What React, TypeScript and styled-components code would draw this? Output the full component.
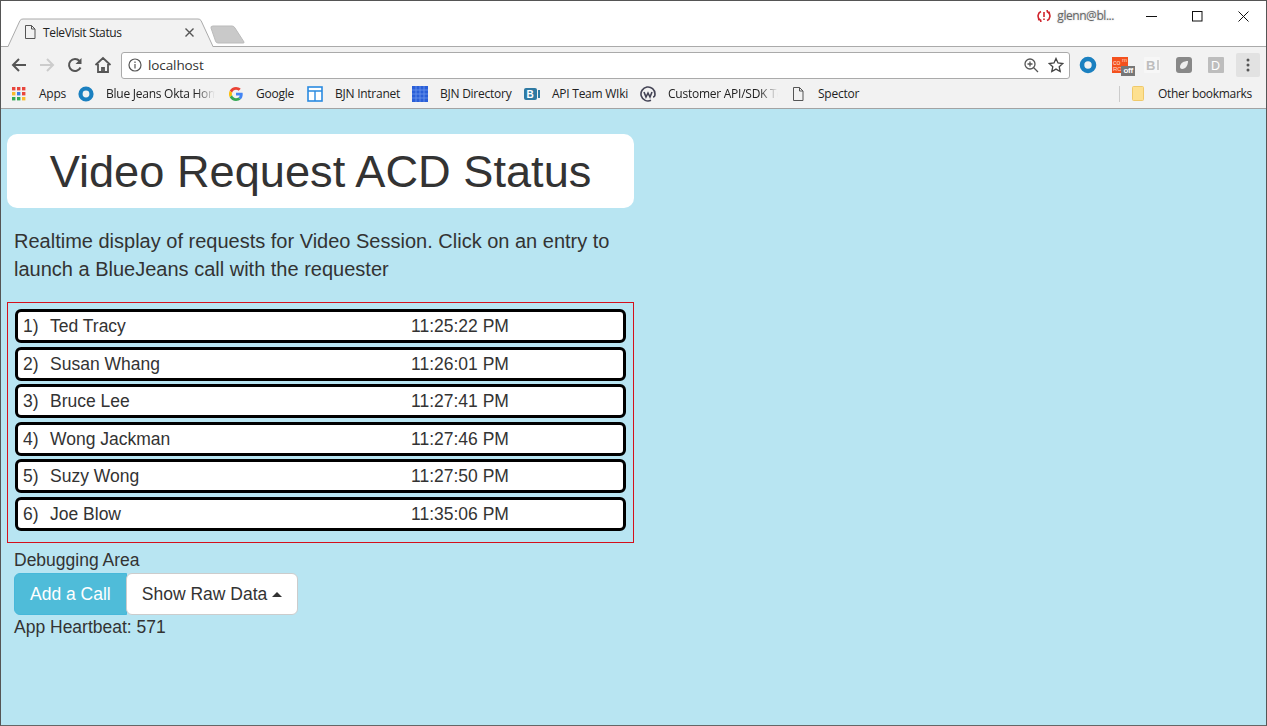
import React from "react";
import styled, { createGlobalStyle } from "styled-components";

const Global = createGlobalStyle`
  html, body { margin: 0; padding: 0; height: 100%; }
  body { background: #b8e5f2; font-family: "Liberation Sans", Arial, sans-serif; overflow: hidden; }
`;

const Win = styled.div`
  width: 1267px; height: 726px; box-sizing: border-box;
  border: 1px solid #555; border-bottom-color: #666;
  display: flex; flex-direction: column; background: #b8e5f2;
`;
const TitleBar = styled.div`
  height: 46px; background: #fff; display: flex; align-items: flex-start; flex: none;
  box-sizing: border-box; border-bottom: 1px solid #aaa; position: relative;
`;
const TabSvg = styled.svg`position: absolute; left: 0; top: 0;`;
const TabIcon = styled.div`
  position: absolute; left: 21px; top: 23px; display: flex;
`;
const TabTitle = styled.span`
  position: absolute; left: 42px; top: 25px; font: 12px/14px "Open Sans", "Noto Sans", sans-serif; color: #222;
  letter-spacing: -0.35px;
`;
const TabClose = styled.div`position: absolute; left: 184px; top: 27px; display: flex;`;
const Profile = styled.div`
  margin-left: auto; display: flex; align-items: center; height: 30px;
`;
const ProfileName = styled.span`
  font: 12px/14px "Open Sans", sans-serif; color: #666; letter-spacing: -0.45px; margin: 0 14px 0 6px;
  text-shadow: 0 0 2px #bbb;
`;
const WinBtn = styled.div`width: 46px; height: 30px; display: flex; align-items: center; justify-content: center;`;
const Toolbar = styled.div`
  height: 34px; background: #f2f2f2; display: flex; align-items: center; flex: none; padding: 2px 0 0 4px; box-sizing: border-box;
`;
const NavBtn = styled.div`width: 28px; height: 28px; display: flex; align-items: center; justify-content: center; flex: none;`;
const Omnibox = styled.div`
  width: 949px; height: 27px; box-sizing: border-box; margin-left: 4px; background: #fff; border: 1px solid #aaa; border-radius: 3px;
  display: flex; align-items: center; padding: 0 5px 0 6px; flex: none;
`;
const Url = styled.span`font: 13.5px/16px "Open Sans", sans-serif; color: #333; margin-left: 6px; letter-spacing: -0.1px;`;
const OmniRight = styled.div`margin-left: auto; display: flex; align-items: center; gap: 9px;`;
const Ext = styled.div`width: 32px; height: 28px; display: flex; align-items: center; justify-content: center; position: relative; flex: none;`;
const ExtRow = styled.div`display: flex; align-items: center; margin-left: 2px;`;
const Off = styled.span`
  position: absolute; right: 1px; bottom: 3px; background: #777; color: #fff; font: bold 8px/10px "Liberation Sans", sans-serif; padding: 0 2px; letter-spacing: -0.2px;
`;
const MenuBtn = styled.div`width: 24px; height: 24px; background: #e2e2e2; display: flex; align-items: center; justify-content: center; border-radius: 2px; margin-left: 4px;`;
const Bookmarks = styled.div`
  height: 25px; background: #f2f2f2; border-bottom: 1px solid #a3a3a3; box-sizing: content-box; display: flex; align-items: center; flex: none;
  padding: 0 0 2px 10px; position: relative;
`;
const Mark = styled.div<{ $w: number; $gap: number; $fade?: boolean }>`
  display: flex; align-items: center; width: ${(p) => p.$w}px; margin-right: ${(p) => p.$gap}px; flex: none;
  ${(p) => (p.$fade ? "mask-image: linear-gradient(to right, #000 86%, transparent 100%);" : "")}
`;
const MarkIcon = styled.div`width: 16px; height: 16px; display: flex; align-items: center; justify-content: center; flex: none; margin-right: 12px;`;
const MarkText = styled.span`
  font: 12px/14px "Open Sans", "Noto Sans", sans-serif; color: #222; white-space: nowrap; letter-spacing: -0.25px;
`;
const OtherText = styled(MarkText)`letter-spacing: -0.3px;`;
const OtherWrap = styled.div`
  position: absolute; right: 0; top: 0; height: 25px; display: flex; align-items: center; padding-right: 14px;
`;
const Sep = styled.div`width: 1px; height: 16px; background: #ccc; margin-right: 10px;`;
const Page = styled.main`
  flex: 1; padding: 25px 0 0 6px; color: #333; width: 627px;
`;
const Jumbo = styled.div`
  background: #fff; border-radius: 10px; height: 74px; box-sizing: border-box; padding-top: 2px; width: 627px; display: flex; align-items: center; justify-content: center;
`;
const H1 = styled.h1`font-size: 45.2px; font-weight: 400; margin: 0; line-height: 1; color: #333;`;
const Lead = styled.p`
  margin: 19px 0 0 7px; font-size: 20px; line-height: 28px; width: 610px; color: #333;
`;
const Queue = styled.div`
  margin-top: 19px; width: 627px; height: 241px; box-sizing: border-box; border: 1px solid #d4101c;
  padding: 6px 7px 0; display: flex; flex-direction: column;
`;
const Row = styled.div`
  height: 34px; box-sizing: border-box; background: #fff; border: 3px solid #000; border-radius: 6px; display: flex; align-items: center;
  padding: 0 0 0 5px; font-size: 17.5px; color: #333; flex: none;
  &:nth-child(even) { margin-top: 4px; }
  &:nth-child(odd):not(:first-child) { margin-top: 3px; }
`;
const Num = styled.span`width: 27px; flex: none;`;
const Name = styled.span`width: 361px; flex: none;`;
const Debug = styled.div`margin: 5px 0 0 7px; font-size: 17.5px; line-height: 25px; color: #333;`;
const BtnRow = styled.div`display: flex; height: 42px;`;
const Btn = styled.button<{ $primary?: boolean }>`
  font: 17.5px/24px "Liberation Sans", sans-serif; padding: 0 15px; height: 42px; box-sizing: border-box; cursor: pointer;
  background: ${(p) => (p.$primary ? "#4fbcd9" : "#fff")};
  color: ${(p) => (p.$primary ? "#fff" : "#333")};
  border: 1px solid ${(p) => (p.$primary ? "#46b8da" : "#ccc")};
  border-radius: ${(p) => (p.$primary ? "6px 0 0 6px" : "6px")};
  margin-left: ${(p) => (p.$primary ? "0" : "-1px")};
  display: flex; align-items: center;
`;
const Caret = styled.span`
  width: 0; height: 0; margin-left: 5px; border-left: 5px solid transparent; border-right: 5px solid transparent; border-bottom: 5px solid #333;
`;
const Beat = styled.div`line-height: 25px;`;

const rows = [
  ["Ted Tracy", "11:25:22 PM"], ["Susan Whang", "11:26:01 PM"], ["Bruce Lee", "11:27:41 PM"],
  ["Wong Jackman", "11:27:46 PM"], ["Suzy Wong", "11:27:50 PM"], ["Joe Blow", "11:35:06 PM"],
];

const Doc = ({ s = 16 }: { s?: number }) => (
  <svg width={s} height={s} viewBox="0 0 16 16" fill="none" stroke="#555" strokeWidth="1">
    <path d="M3.5 1.5h6l3.5 3.5v9.5h-9.5z M9.5 1.5V5H13" />
  </svg>
);

const marks: { t: string; w: number; g: number; fade?: boolean; i: React.ReactNode }[] = [
  { t: "Apps", w: 56, g: 11, i: (
    <svg width="14" height="14" viewBox="0 0 14 14">
      {[["#e8453c","#e8453c","#e8453c"],["#f9bb2d","#3b7de8","#e8453c"],["#34a853","#34a853","#f9bb2d"]].map((r,y)=>r.map((c,x)=><rect key={`${x}${y}`} x={x*5} y={y*5} width="3.4" height="3.4" fill={c}/>))}
    </svg>) },
  { t: "Blue Jeans Okta Hom", w: 137, g: 13, fade: true, i: (
    <svg width="16" height="16" viewBox="0 0 16 16"><circle cx="8" cy="8" r="5.5" fill="none" stroke="#1b80c0" strokeWidth="4.2"/></svg>) },
  { t: "Google", w: 66, g: 13, i: (
    <svg width="14" height="14" viewBox="0 0 48 48">
      <path fill="#EA4335" d="M24 9.5c3.5 0 6.7 1.2 9.2 3.6l6.9-6.9C35.9 2.4 30.5 0 24 0 14.6 0 6.5 5.4 2.6 13.2l8 6.2C12.5 13.6 17.800 9.500 24 9.500z"/>
      <path fill="#4285F4" d="M47 24.500c0-1.600-.1-3.100-.4-4.500H24v9h12.900c-.6 3-2.200 5.500-4.700 7.200l7.700 6c4.500-4.200 7.100-10.300 7.100-17.700z"/>
      <path fill="#FBBC05" d="M10.500 28.600c-.5-1.400-.8-3-.8-4.600s.3-3.200.8-4.600l-8-6.200C.9 16.500 0 20.100 0 24s.9 7.500 2.600 10.800z"/>
      <path fill="#34A853" d="M24 48c6.500 0 11.900-2.100 15.900-5.800l-7.700-6c-2.200 1.400-4.900 2.300-8.200 2.300-6.200 0-11.500-4.200-13.400-9.800l-8 6.200C6.500 42.600 14.600 48 24 48z"/>
    </svg>) },
  { t: "BJN Intranet", w: 93, g: 12, i: (
    <svg width="16" height="16" viewBox="0 0 16 16"><rect x="1" y="1" width="14" height="14" fill="#fff" stroke="#2a8ae0" strokeWidth="1.6"/><path d="M1 5h14M8 5v10" stroke="#2a8ae0" strokeWidth="1.4"/></svg>) },
  { t: "BJN Directory", w: 100, g: 12, i: (
    <svg width="16" height="16" viewBox="0 0 16 16"><rect width="16" height="16" fill="#2a5fd8"/><path d="M4 0v16M8 0v16M12 0v16M0 4h16M0 8h16M0 12h16" stroke="#6d98ee" strokeWidth=".8"/></svg>) },
  { t: "API Team WIki", w: 104, g: 12, i: (
    <svg width="16" height="16" viewBox="0 0 16 16"><rect x="0" y="2" width="13" height="12" rx="2" fill="#2f7aa3"/><text x="2.500" y="12" fontSize="10" fontWeight="700" fill="#fff" fontFamily="Liberation Sans">B</text><rect x="14" y="4" width="2" height="8" fill="#2f7aa3"/></svg>) },
  { t: "Customer API/SDK Te", w: 138, g: 12, fade: true, i: (
    <svg width="16" height="16" viewBox="0 0 16 16" fill="none" stroke="#445" strokeWidth="1.6"><path d="M11 14.300A7 7 0 1 1 15 8c0 2-1 3-2 3"/><path d="M4 6l2 5 2-4 2 4 2-5"/></svg>) },
  { t: "Spector", w: 70, g: 0, i: <Doc /> },
];

export default function App() {
  return (
    <Win>
      <Global />
      <TitleBar>
        <TabSvg width="250" height="46" viewBox="0 0 250 46">
          <path d="M7 46L19 19.500Q20 18 22 18H197Q199 18 200 19.500L212 46Z" fill="#f2f2f2" />
          <path d="M7 45.500L19 19.500Q20 18 22 18H197Q199 18 200 19.500L212 45.500" fill="none" stroke="#aaa" />
          <path d="M210 27Q209.500 25 212 25H231Q233 25 234 27L243 41Q243.500 42 242 42H217Q215 42 214.500 40Z" fill="#c9c9c9" stroke="#bbb" />
        </TabSvg>
        <TabIcon><Doc /></TabIcon>
        <TabTitle>TeleVisit Status</TabTitle>
        <TabClose>
          <svg width="9" height="9" viewBox="0 0 9 9" stroke="#555" strokeWidth="1.400"><path d="M.5.500l8 8M8.500.500l-8 8" /></svg>
        </TabClose>
        <Profile>
          <svg width="14" height="12" viewBox="0 0 14 12" fill="none" stroke="#d0232b" strokeWidth="1.600">
            <path d="M4 1.500a5 5 0 0 0-1 8.500M10 10.500a5 5 0 0 0 1-8.500M7 2v5M7 8.500v1.500M1 9.500l2.500.5.500 2M13 2.500l-2.500-.5-.5-2" />
          </svg>
          <ProfileName>glenn@bl...</ProfileName>
          <WinBtn><svg width="11" height="11" stroke="#111"><path d="M0 5.500h11" /></svg></WinBtn>
          <WinBtn><svg width="11" height="11" fill="none" stroke="#111"><rect x=".5" y=".5" width="9.500" height="9.500" /></svg></WinBtn>
          <WinBtn><svg width="11" height="11" stroke="#111"><path d="M.5.500l10 10M10.500.500l-10 10" /></svg></WinBtn>
        </Profile>
      </TitleBar>
      <Toolbar>
        <NavBtn><svg width="16" height="16" viewBox="0 0 16 16" fill="none" stroke="#555" strokeWidth="2"><path d="M15 8H2M8 2L2 8l6 6" /></svg></NavBtn>
        <NavBtn><svg width="16" height="16" viewBox="0 0 16 16" fill="none" stroke="#ccc" strokeWidth="2"><path d="M1 8h13M8 2l6 6-6 6" /></svg></NavBtn>
        <NavBtn><svg width="16" height="16" viewBox="0 0 16 16" fill="none" stroke="#555" strokeWidth="2"><path d="M13.500 10.500A6 6 0 1 1 12.500 4" /><path d="M14.500 1v6h-6z" fill="#555" stroke="none" /></svg></NavBtn>
        <NavBtn><svg width="18" height="18" viewBox="0 0 18 18" fill="none" stroke="#555" strokeWidth="1.800"><path d="M1.500 9L9 2l7.500 7M4 8v8h10V8M8 16v-4h2v4" /></svg></NavBtn>
        <Omnibox>
          <svg width="14" height="14" viewBox="0 0 14 14" fill="none" stroke="#555" strokeWidth="1.200"><circle cx="7" cy="7" r="6" /><path d="M7 6v4.500M7 3.500v1.500" /></svg>
          <Url>localhost</Url>
          <OmniRight>
            <svg width="15" height="15" viewBox="0 0 15 15" fill="none" stroke="#555" strokeWidth="1.300"><circle cx="6" cy="6" r="5" /><path d="M9.500 9.500L14 14M3.500 6h5M6 3.500v5" /></svg>
            <svg width="16" height="16" viewBox="0 0 16 16" fill="none" stroke="#444" strokeWidth="1.300"><path d="M8 1.500l2 4.500 4.800.500-3.600 3.200 1 4.800L8 12.100l-4.200 2.400 1-4.800L1.200 6.500 6 6z" /></svg>
          </OmniRight>
        </Omnibox>
        <ExtRow>
          <Ext><svg width="18" height="18" viewBox="0 0 18 18"><circle cx="9" cy="9" r="6" fill="none" stroke="#1b80c0" strokeWidth="4.600" /></svg></Ext>
          <Ext>
            <svg width="16" height="16" viewBox="0 0 16 16"><rect width="16" height="16" fill="#f4511e" /><text x="1" y="8" fontSize="7" fill="#ffd9c9" fontFamily="Liberation Sans">co</text><text x="10" y="5" fontSize="6" fill="#ffd9c9" fontFamily="Liberation Sans">m</text><text x="1" y="14" fontSize="6" fill="#ffd9c9" fontFamily="Liberation Sans">RO</text></svg>
            <Off>off</Off>
          </Ext>
          <Ext><svg width="16" height="16" viewBox="0 0 16 16"><rect width="16" height="16" rx="1" fill="#f7f7f7" /><text x="2" y="13" fontSize="13" fontWeight="700" fill="#bdbdbd" fontFamily="Liberation Sans">B</text><rect x="13" y="3" width="2" height="10" fill="#ccc" /></svg></Ext>
          <Ext><svg width="16" height="16" viewBox="0 0 16 16"><rect width="16" height="16" rx="3" fill="#888" /><path d="M4 10c0-4 4-6 8-6 0 4-2 8-6 8-1 0-2-1-2-2z" fill="#eee" /></svg></Ext>
          <Ext><svg width="16" height="16" viewBox="0 0 16 16"><rect width="16" height="16" rx="1" fill="#bdbdbd" /><text x="3" y="13" fontSize="12.500" fill="#fff" fontFamily="Liberation Sans">D</text></svg></Ext>
          <MenuBtn><svg width="4" height="14" viewBox="0 0 4 14" fill="#555"><circle cx="2" cy="2" r="1.500" /><circle cx="2" cy="7" r="1.500" /><circle cx="2" cy="12" r="1.500" /></svg></MenuBtn>
        </ExtRow>
      </Toolbar>
      <Bookmarks>
        {marks.map((m) => (
          <Mark key={m.t} $w={m.w} $gap={m.g} $fade={m.fade}>
            <MarkIcon>{m.i}</MarkIcon>
            <MarkText>{m.t}</MarkText>
          </Mark>
        ))}
        <OtherWrap>
          <Sep />
          <MarkIcon><svg width="12" height="15" viewBox="0 0 12 15"><rect x=".5" y=".5" width="11" height="14" rx="1" fill="#fde08f" stroke="#efc96a" /></svg></MarkIcon>
          <OtherText>Other bookmarks</OtherText>
        </OtherWrap>
      </Bookmarks>
      <Page>
        <Jumbo><H1>Video Request ACD Status</H1></Jumbo>
        <Lead>Realtime display of requests for Video Session. Click on an entry to launch a BlueJeans call with the requester</Lead>
        <Queue>
          {rows.map(([n, t], i) => (
            <Row key={n}>
              <Num>{i + 1})</Num>
              <Name>{n}</Name>
              <span>{t}</span>
            </Row>
          ))}
        </Queue>
        <Debug>
          Debugging Area
          <BtnRow>
            <Btn $primary>Add a Call</Btn>
            <Btn>Show Raw Data<Caret /></Btn>
          </BtnRow>
          <Beat>App Heartbeat: 571</Beat>
        </Debug>
      </Page>
    </Win>
  );
}
